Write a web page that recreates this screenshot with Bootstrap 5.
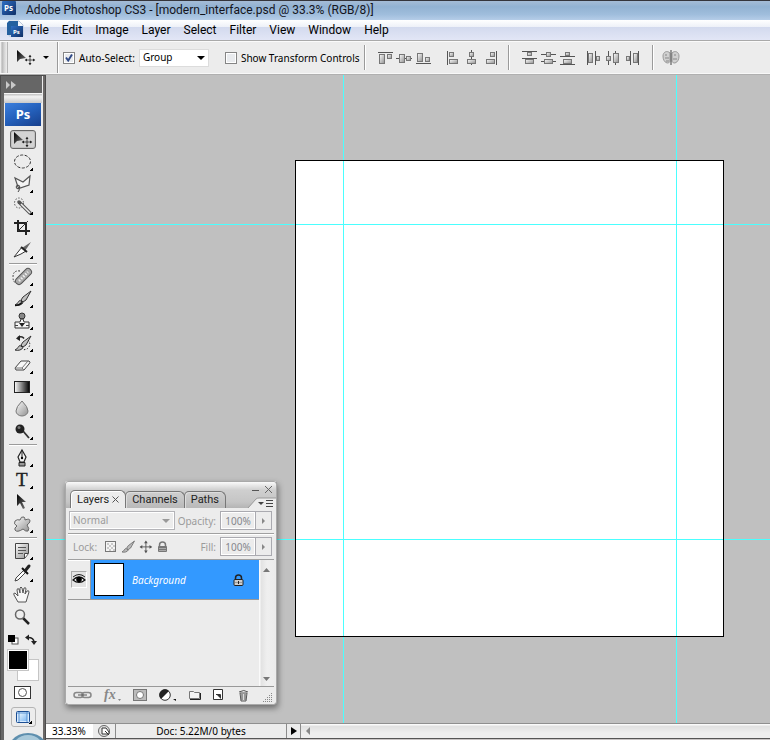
<!DOCTYPE html>
<html lang="en">
<head>
<meta charset="utf-8">
<meta name="viewport" content="width=device-width, initial-scale=1">
<title>Adobe Photoshop CS3 - [modern_interface.psd @ 33.3% (RGB/8)]</title>
<link rel="stylesheet" href="https://cdn.jsdelivr.net/npm/bootstrap@5.3.0/dist/css/bootstrap.min.css">
<style>
  body { font-family: "Noto Sans", sans-serif; font-size: 10px; line-height: 14px; color: #000; background: #ececec; }
  svg { display: block; flex: none; overflow: visible; }
  button { font: inherit; color: inherit; }
  .tool-btn { border: 0; background: none; padding: 0; }
  .title-bar { height: 20px; border-top: 1px solid #35353b; background: linear-gradient(#a5bcd6, #92b2d2 30%, #9fbddc 70%, #b5cde8); font: 12px/18px Roboto, sans-serif; color: #14141c; }
  .title-bar .title-text { padding-left: 9px; }
  .menu-bar { height: 20px; background: linear-gradient(#fff, #eef1f8 34%, #d3daee 36%, #e2e6f6); font: 12px/20px Roboto, sans-serif; padding-left: 7px; }
  .menu-bar a { color: #000; text-decoration: none; margin-right: 13px; }
  .options-bar { height: 35px; background: #ececec; border-top: 1px solid #a9a9a9; border-bottom: 1px solid #b0b0b0; box-shadow: inset 0 1px #fafafa, inset 0 -1px #f8f8f8; }
  .gripper { width: 8px; height: 31px; background: linear-gradient(90deg, #fff, #b8b8b8 30%, #d4d4d4 60%, #ededed); border-right: 1px solid #b5b5b5; }
  .v-rule { width: 2px; height: 25px; background: #9a9a9a; border-right: 1px solid #fff; }
  .v-rule.tall { height: 31px; }
  .check { width: 12px; height: 12px; margin: 0; border: 1px solid #858585; border-radius: 0; background-color: #e9ebee; background-size: 10px; box-shadow: inset 0 0 0 1px #fff; appearance: none; }
  .check:checked { background: #e9ebee url("data:image/svg+xml,%3Csvg xmlns='http://www.w3.org/2000/svg' viewBox='0 0 10 10'%3E%3Cpath d='M2 4.5 4.2 7.5 8 1.5' fill='none' stroke='%23304a86' stroke-width='1.9'/%3E%3C/svg%3E"); }
  .mode-select { width: 70px; height: 18px; padding: 0 4px 0 3px; border: 1px solid #dcdcdc; border-radius: 0; appearance: none; font-size: 10px; line-height: 15px; color: #000; background: #fff url("data:image/svg+xml,%3Csvg xmlns='http://www.w3.org/2000/svg' viewBox='0 0 8 4'%3E%3Cpath d='M0 0h8L4 4z'/%3E%3C/svg%3E") no-repeat right 3px center / 8px 4px; }
  .tool-rail { width: 46px; background: #ececec; border: solid #4c4c4c; border-width: 1px 1px 0 1px; box-shadow: inset 3px 0 #666, inset -2px 0 #6b6867; padding: 0 3px; }
  .rail-head { height: 17px; background: #666; }
  .rail-grip { height: 10px; background: linear-gradient(#c0c0c0, #f2f2f2 30%, #c9c9c9); border-top: 1px solid #f6f6f6; }
  .ps-logo { height: 23px; background: linear-gradient(155deg, #3c7fdd, #2460bb 50%, #173f8c); color: #fff; font: bold 13px/23px "Noto Sans", sans-serif; margin: 0 1px; text-align: center; }
  .rail-tools { padding-top: 3px; }
  .rail-tools .tool-btn { width: 26px; height: 22px; display: flex; align-items: center; justify-content: center; }
  .rail-tools .active { height: 19px; margin: 1px 0 2px; border: 1px solid #666; border-radius: 3px; background: #d3d3d3; box-shadow: inset 0 0 0 1px #c2c2c2; }
  .h-rule { width: 28px; height: 2px; margin: 2px 0 1px; border-top: 1px solid #9b9b9b; background: #fff; }
  .fly::after { content: ""; align-self: flex-end; margin: 0 0 2px -3px; width: 3px; height: 3px; background: linear-gradient(135deg, transparent 45%, #000 45%); }
  .screen-btn { width: 25px !important; height: 20px !important; border: 1px solid #b5b5b5; border-radius: 3px; margin-top: 3px; }
  .workspace { background: #c0c0c0; overflow: hidden; }
  .art { left: 249px; top: 85px; width: 429px; height: 477px; background: #fff; }
  .art-edge { background: none; border: 1px solid #000; z-index: 2; }
  .guide { background: #4affff; z-index: 1; }
  .guide-v { width: 1px; top: 0; bottom: 0; }
  .guide-h { height: 1px; left: 0; right: 0; }
  .g1 { left: 297px; } .g2 { left: 630px; } .g3 { top: 149px; } .g4 { top: 464px; }
  .layers { left: 19px; top: 406px; width: 212px; background: #ececec; border: 1px solid #fafafa; border-right-color: #8a8a8a; border-bottom-color: #777; outline: 1px solid #a9a9a9; outline-offset: -1px; border-radius: 3px; box-shadow: 1px 3px 6px rgba(0,0,0,.45); z-index: 3; color: #9b9b9b; padding: 0 2px; }
  .panel-head { height: 26px; margin: 0 -2px; padding: 0 3px 0 4px; border-radius: 3px 3px 0 0; background: linear-gradient(#fafafa, #cfcfcf 8px, #c5c5c5 20px, #b4b4b4); }
  .tab-btn { height: 17px; padding: 0 6px; border: 1px solid #777; border-bottom: 0; border-radius: 5px 6px 0 0; background: linear-gradient(#cfcfcf, #b9b9b9); font: 11px/16px Roboto, sans-serif; color: #222; margin-left: -1px; display: flex; align-items: center; gap: 3px; box-shadow: inset 1px 1px #ddd; }
  .tab-btn.current { height: 18px; background: #ececec; box-shadow: inset 1px 1px #fff; margin-left: 0; }
  .p-row { height: 26px; border-bottom: 1px solid #a0a0a0; box-shadow: 0 1px #fff; padding-left: 1px; padding-right: 2px; }
  .blend-select { width: 106px; height: 19px; padding: 0 3px; border: 1px solid #b4b4b8; border-radius: 0; box-shadow: inset 0 0 0 1px #fff; appearance: none; font-size: 10px; line-height: 15px; color: #9b9b9b; background: #ececec url("data:image/svg+xml,%3Csvg xmlns='http://www.w3.org/2000/svg' viewBox='0 0 8 4'%3E%3Cpath d='M0 0h8L4 4z' fill='%23999'/%3E%3C/svg%3E") no-repeat right 4px center / 8px 4px; }
  .lock-set { gap: 5px; }
  .pct { width: 36px; height: 19px; border: 1px solid #aaaab0; padding: 0; text-align: center; font-size: 10px; color: #85878c; background: #ececec; box-shadow: inset 0 0 0 1px #fff; border-radius: 0; }
  .pct-btn { width: 17px; height: 19px; border: 1px solid #aaaab0; margin-left: -1px; display: flex; align-items: center; justify-content: center; }
  .layer-list { height: 127px; border-bottom: 1px solid #999; }
  .layer-row { height: 40px; border-bottom: 1px solid #999; }
  .eye-cell { width: 23px; border-right: 1px solid #999; padding-left: 3px; }
  .eye-btn { width: 16px; height: 17px; border: 1px solid #aaa; border-right-color: #fff; border-bottom-color: #fff; background: #e3e3e3; padding: 0; }
  .layer-name { background: #39f; color: #fff; font-style: italic; padding: 0 15px 0 3px; }
  .thumb { width: 30px; height: 33px; border: 1px solid #000; background: #fff; }
  .scroll-y { width: 15px; padding: 8px 3px 5px 4px; background: linear-gradient(90deg, #fafafa 1px, #e2e2e2 2px, #efefef 8px, #ededed); }
  .panel-foot { height: 17px; padding: 0 1px 1px 5px; }
  .status { height: 16px; border-top: 1px solid #8f8f8f; border-bottom: 1px solid #555; color: #000; background: #ececec; }
  .zoom-box { width: 47px; border: 0; padding: 0 0 0 6px; font-size: 10px; background: #fff; color: #000; }
  .doc-info { width: 172px; border: solid #8b8b8b; border-width: 0 1px; }
  .run-btn { width: 14px; border-right: 1px solid #8b8b8b; display: flex; align-items: center; justify-content: center; }
  .scroll-x { background: linear-gradient(#fafafa 1px, #e0e0e0 2px, #eee 9px); padding-left: 5px; }
  .below { height: 1px; background: #c9c5c5; }
  .orb { left: 10px; bottom: 0; z-index: 4; }
</style>
<script src="https://cdn.jsdelivr.net/npm/bootstrap@5.3.0/dist/js/bootstrap.bundle.min.js"></script>
</head>
<body class="vh-100 d-flex flex-column overflow-hidden">

<svg width="0" height="0" class="position-absolute" aria-hidden="true">
  <defs>
    <linearGradient id="gy" x1="0" y1="0" x2="1" y2="1"><stop offset="0" stop-color="#fdfdfd"/><stop offset="1" stop-color="#909090"/></linearGradient>
    <linearGradient id="bl" x1="0" y1="0" x2="1" y2="1"><stop offset="0" stop-color="#2f6fc4"/><stop offset="1" stop-color="#0f2f66"/></linearGradient>
    <linearGradient id="bw"><stop offset="0" stop-color="#fff"/><stop offset="1" stop-color="#000"/></linearGradient>
    <linearGradient id="dk" x1="0" y1="0" x2="1" y2="1"><stop offset="0" stop-color="#000"/><stop offset="1" stop-color="#777"/></linearGradient>
    <linearGradient id="sc" x1="0" y1="0" x2="1" y2="1"><stop offset="0" stop-color="#eaf6ff"/><stop offset="1" stop-color="#7fb8f2"/></linearGradient>
    <g id="four"><path d="M6 0v12M0 6h12" stroke="#222" fill="none"/><path d="M6-1 8 2H4zM6 13 4 10h4zM-1 6l3-2v4zM13 6l-3 2V4z" fill="#222"/></g>
    <g id="move"><path d="M0 0v12l3-3 6-1z" fill="url(#dk)"/><use href="#four" transform="translate(8.500 5.500) scale(.75)"/></g>
    <path id="brush" d="M16 0 8 6 6 9l2 2 3-2zM5 9.500C3 10 3 13 0 14c3 1 7 0 8-2.500z"/>
  </defs>
</svg>

<header>
  <div class="title-bar d-flex">
    <svg width="17" height="17" viewBox="0 0 17 17"><rect x="2" width="14" height="14" rx="1" fill="url(#bl)"/><text x="4" y="10" font-family="Noto Sans" font-size="8" font-weight="bold" fill="#fff">Ps</text></svg>
    <span class="title-text">Adobe Photoshop CS3 - [modern_interface.psd @ 33.3% (RGB/8)]</span>
  </div>
  <nav class="menu-bar d-flex" aria-label="Application menu">
    <svg width="23" height="20" viewBox="0 0 23 20"><path d="M2 1h10l4 4v11H2z" fill="#f3f6fb" stroke="#b9c6da"/><path d="M0 3 2 1h9v5H4v9H0z" fill="#24609f"/><rect x="4" y="6" width="12" height="11" fill="url(#bl)"/><text x="6" y="14" font-family="Noto Sans" font-size="6" font-weight="bold" fill="#fff">Ps</text></svg>
    <a href="#">File</a><a href="#">Edit</a><a href="#">Image</a><a href="#">Layer</a><a href="#">Select</a><a href="#">Filter</a><a href="#">View</a><a href="#">Window</a><a href="#">Help</a>
  </nav>
  <div class="options-bar d-flex align-items-center">
    <div class="gripper"></div>
    <button class="tool-btn d-flex align-items-center ms-2 gap-2" aria-label="Move tool presets">
      <svg width="19" height="17" viewBox="0 0 19 17"><use href="#move" x="1" y="1"/></svg>
      <svg width="6" height="3" viewBox="0 0 6 3"><path d="M0 0h6L3 3z"/></svg>
    </button>
    <div class="v-rule tall ms-2"></div>
    <input class="check ms-1" type="checkbox" id="auto" checked><label class="px-1" for="auto">Auto-Select:</label>
    <select class="mode-select me-3" aria-label="Auto-select target"><option>Group</option><option>Layer</option></select>
    <input class="check" type="checkbox" id="trans"><label class="ps-1" for="trans">Show Transform Controls</label>
    <div class="v-rule ms-1"></div>
    <div class="d-flex ms-2">
      <button class="tool-btn ms-1" aria-label="Align top edges"><svg width="15" height="16" viewBox="0 0 15 16"><path d="M0 2.500h15" stroke="#555"/><rect x="1.500" y="4.500" width="5" height="9" fill="url(#gy)" stroke="#777"/><rect x="9.500" y="4.500" width="4" height="4" fill="url(#gy)" stroke="#777"/></svg></button>
      <button class="tool-btn ms-1" aria-label="Align vertical centers"><svg width="15" height="16" viewBox="0 0 15 16"><path d="M-1 8.500h16" stroke="#555"/><rect x="2.500" y="4.500" width="5" height="8" fill="url(#gy)" stroke="#777"/><rect x="9.500" y="6.500" width="4" height="4" fill="url(#gy)" stroke="#777"/></svg></button>
      <button class="tool-btn ms-1" aria-label="Align bottom edges"><svg width="15" height="16" viewBox="0 0 15 16"><path d="M0 13.500h15" stroke="#555"/><rect x="1.500" y="3.500" width="5" height="8" fill="url(#gy)" stroke="#777"/><rect x="9.500" y="7.500" width="4" height="4" fill="url(#gy)" stroke="#777"/></svg></button>
      <button class="tool-btn ms-3" aria-label="Align left edges"><svg width="15" height="16" viewBox="0 0 15 16"><path d="M.5 1v14" stroke="#555"/><rect x="2.500" y="2.500" width="4" height="4" fill="url(#gy)" stroke="#777"/><rect x="2.500" y="9.500" width="8" height="4" fill="url(#gy)" stroke="#777"/></svg></button>
      <button class="tool-btn ms-1" aria-label="Align horizontal centers"><svg width="15" height="16" viewBox="0 0 15 16"><path d="M5.500 0v15" stroke="#555"/><rect x="3.500" y="2.500" width="4" height="4" fill="url(#gy)" stroke="#777"/><rect x="1.500" y="9.500" width="8" height="4" fill="url(#gy)" stroke="#777"/></svg></button>
      <button class="tool-btn ms-1" aria-label="Align right edges"><svg width="15" height="16" viewBox="0 0 15 16"><path d="M11.500 1v14" stroke="#555"/><rect x="5.500" y="2.500" width="4" height="4" fill="url(#gy)" stroke="#777"/><rect x="1.500" y="9.500" width="8" height="4" fill="url(#gy)" stroke="#777"/></svg></button>
    </div>
    <div class="v-rule mx-2"></div>
    <div class="d-flex ms-1">
      <button class="tool-btn me-1" aria-label="Distribute top edges"><svg width="15" height="16" viewBox="0 0 15 16"><path d="M0 1.500h15M0 8.500h15" stroke="#555"/><rect x="5.500" y="2.500" width="4" height="3" fill="url(#gy)" stroke="#777"/><rect x="3.500" y="9.500" width="8" height="4" fill="url(#gy)" stroke="#777"/></svg></button>
      <button class="tool-btn me-1" aria-label="Distribute vertical centers"><svg width="15" height="16" viewBox="0 0 15 16"><path d="M0 4.500h15M0 11.500h15" stroke="#555"/><rect x="5.500" y="2.500" width="4" height="4" fill="url(#gy)" stroke="#777"/><rect x="3.500" y="9.500" width="8" height="4" fill="url(#gy)" stroke="#777"/></svg></button>
      <button class="tool-btn me-1" aria-label="Distribute bottom edges"><svg width="15" height="16" viewBox="0 0 15 16"><path d="M0 6.500h15M0 14.500h15" stroke="#555"/><rect x="5.500" y="2.500" width="4" height="3" fill="url(#gy)" stroke="#777"/><rect x="3.500" y="9.500" width="8" height="4" fill="url(#gy)" stroke="#777"/></svg></button>
      <button class="tool-btn ms-2 me-1" aria-label="Distribute left edges"><svg width="15" height="16" viewBox="0 0 15 16"><path d="M.5 1v14M8.500 1v14" stroke="#555"/><rect x="1.500" y="3.500" width="4" height="9" fill="url(#gy)" stroke="#777"/><rect x="9.500" y="6.500" width="3" height="4" fill="url(#gy)" stroke="#777"/></svg></button>
      <button class="tool-btn me-1" aria-label="Distribute horizontal centers"><svg width="15" height="16" viewBox="0 0 15 16"><path d="M2.500 1v14M9.500 1v14" stroke="#555"/><rect x=".5" y="6.500" width="4" height="4" fill="url(#gy)" stroke="#777"/><rect x="7.500" y="3.500" width="5" height="9" fill="url(#gy)" stroke="#777"/></svg></button>
      <button class="tool-btn me-1" aria-label="Distribute right edges"><svg width="15" height="16" viewBox="0 0 15 16"><path d="M5.500 1v14M13.500 1v14" stroke="#555"/><rect x="1.500" y="6.500" width="3" height="4" fill="url(#gy)" stroke="#777"/><rect x="8.500" y="3.500" width="4" height="9" fill="url(#gy)" stroke="#777"/></svg></button>
    </div>
    <div class="v-rule mx-2"></div>
    <button class="tool-btn" aria-label="Auto-align layers"><svg width="18" height="16" viewBox="0 0 18 16"><path d="M8 3C5 0 1 2 1 6c0 3 1 6 4 7 2 0 3-1 3-2zM10 3c3-3 7-1 7 3 0 3-1 6-4 7-2 0-3-1-3-2z" fill="#d0d0d0" stroke="#999"/><path d="M3 5h2M3 8h4M12 5h2M11 9h4M4 11h3" stroke="#888"/><path d="M9 0v15" stroke="#444"/></svg></button>
  </div>
</header>

<div class="d-flex flex-grow-1 overflow-hidden position-relative">
  <aside class="tool-rail flex-shrink-0">
    <div class="rail-head px-1 pt-1"><svg width="12" height="9" viewBox="0 0 12 9"><path d="M-2 1v8l4-4zM3 1v8l5-4z" fill="#c9c9c9"/></svg></div>
    <div class="rail-grip"></div>
    <div class="ps-logo">Ps</div>
    <div class="rail-tools d-flex flex-column align-items-center">
      <button class="tool-btn active" aria-label="Move"><svg width="18" height="15" viewBox="0 0 18 15"><use href="#move" x="0" y="0"/></svg></button>
      <button class="tool-btn fly" aria-label="Elliptical marquee"><svg width="20" height="18" viewBox="0 0 20 18"><ellipse cx="9.500" cy="8.500" rx="8" ry="6.500" fill="none" stroke="#333" stroke-dasharray="3 1.500"/></svg></button>
      <button class="tool-btn fly" aria-label="Polygonal lasso"><svg width="20" height="18" viewBox="0 0 20 18"><path d="M5 12 2 3l8 4 7-6-1 9-9 3z" fill="#f4f4f4" stroke="#555" stroke-width="1.200"/><circle cx="5" cy="12" r="1.800" fill="none" stroke="#444"/><path d="M6 13q1 2-1 4" fill="none" stroke="#444"/></svg></button>
      <button class="tool-btn fly" aria-label="Quick selection"><svg width="20" height="18" viewBox="0 0 20 18"><ellipse cx="6" cy="6" rx="4.500" ry="5" fill="none" stroke="#555" stroke-dasharray="1.500 1.500"/><path d="m6 5 11 11" stroke="#555" stroke-width="3.500" stroke-linecap="round"/><path d="m8 7 9 9" stroke="#eee" stroke-width="1.500"/></svg></button>
      <button class="tool-btn" aria-label="Crop"><svg width="20" height="18" viewBox="0 0 20 18"><path d="M5 1v11h12M1 4h12v12" fill="none" stroke="#222" stroke-width="2"/><path d="M5 12 15 2" stroke="#333"/></svg></button>
      <button class="tool-btn fly" aria-label="Slice"><svg width="20" height="18" viewBox="0 0 20 18"><path d="m18 1-9 6 3 3z" fill="#666"/><path d="m9 6 4 4-5 3-7 3z" fill="#fff" stroke="#333"/><path d="m8 6 6 5" stroke="#222" stroke-width="2"/></svg></button>
      <div class="h-rule"></div>
      <button class="tool-btn fly" aria-label="Spot healing brush"><svg width="20" height="18" viewBox="0 0 20 18"><path d="M7 3q-7-1-7 6 0 6 4 6" fill="none" stroke="#333" stroke-dasharray="1.500 1.500"/><path d="M6 13 15 4" stroke="#555" stroke-width="8" stroke-linecap="round"/><path d="M6 13 15 4" stroke="#a9a9a9" stroke-width="6" stroke-linecap="round"/><path d="M6 13 15 4" stroke="#eee" stroke-width="2.500" stroke-dasharray="1.500 1.500"/></svg></button>
      <button class="tool-btn fly" aria-label="Brush"><svg width="20" height="18" viewBox="0 0 20 18"><use href="#brush" x="2" y="1" fill="url(#gy)" stroke="#333"/><path d="M2 15.500q4 0 7-3" stroke="#111" fill="none" stroke-width="1.500"/></svg></button>
      <button class="tool-btn fly" aria-label="Clone stamp"><svg width="20" height="18" viewBox="0 0 20 18"><circle cx="9" cy="4" r="3" fill="#888" stroke="#333"/><path d="M8 7h2l1 3h5v6H2v-6h5z" fill="#f4f4f4" stroke="#333"/><path d="M6 11h6l-3 4z" fill="#222"/><path d="M2 13.500h3M13 13.500h3" stroke="#444"/></svg></button>
      <button class="tool-btn fly" aria-label="History brush"><svg width="20" height="18" viewBox="0 0 20 18"><use href="#brush" x="2" y="2" fill="url(#gy)" stroke="#333"/><path d="M5 3.500q4-2 6 1" fill="none" stroke="#222" stroke-width="1.500"/><path d="M3 4.500 7 1v6z" fill="#222"/><path d="M15 6q4 5-1 9l-4 1" fill="none" stroke="#222" stroke-dasharray="1.500 1.500"/></svg></button>
      <button class="tool-btn fly" aria-label="Eraser"><svg width="20" height="18" viewBox="0 0 20 18"><path d="m2 12 6-7h8q2 1 0 3l-5 6H3z" fill="#f7f7f7" stroke="#444"/><path d="M2 12h7l6-7M9 12l2 2" fill="none" stroke="#777"/></svg></button>
      <button class="tool-btn fly" aria-label="Gradient"><svg width="20" height="18" viewBox="0 0 20 18"><rect x="1.500" y="3.500" width="15" height="11" fill="url(#bw)" stroke="#222"/></svg></button>
      <button class="tool-btn fly" aria-label="Blur"><svg width="20" height="18" viewBox="0 0 20 18"><path d="M9 1q6 6 6 10a6 5 0 0 1-12 0q0-4 6-10z" fill="url(#gy)" stroke="#777"/></svg></button>
      <button class="tool-btn fly" aria-label="Dodge"><svg width="20" height="18" viewBox="0 0 20 18"><path d="m10 9 6 7" stroke="#333" stroke-width="1.800"/><circle cx="7" cy="7" r="4.500" fill="#222"/><circle cx="6" cy="5.500" r="1.500" fill="#777"/></svg></button>
      <div class="h-rule"></div>
      <button class="tool-btn fly" aria-label="Pen"><svg width="20" height="18" viewBox="0 0 20 18"><path d="m9 1 4 7-2 5H7L5 8z" fill="#f4f4f4" stroke="#222" stroke-width="1.200"/><path d="M9 1v7" stroke="#222"/><circle cx="9" cy="9" r="1.200"/><path d="M6 13.500h6V17H6z" fill="#999" stroke="#222"/></svg></button>
      <button class="tool-btn fly" aria-label="Type"><svg width="20" height="18" viewBox="0 0 20 18"><text x="3" y="15" font-family="Liberation Serif" font-size="19" fill="#222" stroke="#222" stroke-width=".4">T</text></svg></button>
      <button class="tool-btn fly" aria-label="Path selection"><svg width="20" height="18" viewBox="0 0 20 18"><path d="M4 1v12l3-3 3 6 2-1-3-6h4z" fill="url(#dk)"/></svg></button>
      <button class="tool-btn fly" aria-label="Custom shape"><svg width="20" height="18" viewBox="0 0 20 18"><path d="M7 5q1-4 4-3 1 1 1 3 5-2 5 1 0 2-3 4 3 4 1 6-2 1-5-2-6 4-8 1-1-2 2-4-4-2-2-5 2-2 5-1z" fill="url(#gy)" stroke="#666"/></svg></button>
      <div class="h-rule"></div>
      <button class="tool-btn fly" aria-label="Notes"><svg width="20" height="18" viewBox="0 0 20 18"><path d="M2.500 1.500h13v10l-4 5h-9z" fill="url(#gy)" stroke="#444"/><path d="M5 5.500h8M5 8.500h8M5 11.500h5" stroke="#555"/><path d="M11.500 16v-4.500H15" fill="#fff" stroke="#444"/></svg></button>
      <button class="tool-btn fly" aria-label="Eyedropper"><svg width="20" height="18" viewBox="0 0 20 18"><path d="m11 6-8 8-1 3 3-1 8-8z" fill="#fff" stroke="#444"/><path d="m9 4 6 6" stroke="#111" stroke-width="2"/><path d="m12 7 4-5" stroke="#222" stroke-width="3" stroke-linecap="round"/></svg></button>
      <button class="tool-btn" aria-label="Hand"><svg width="20" height="18" viewBox="0 0 20 18"><path d="M5 16 1 9q-1-2 1-2l3 3-1-6q0-2 2-1l1 4V2q1-2 2 0l1 5 1-5q2-1 2 1l-1 5 2-3q2-1 2 1l-3 10z" fill="#f7f7f7" stroke="#555"/></svg></button>
      <button class="tool-btn" aria-label="Zoom"><svg width="20" height="18" viewBox="0 0 20 18"><path d="m10 10 6 6" stroke="#222" stroke-width="2.500"/><circle cx="7" cy="6.500" r="4.500" fill="#eee" stroke="#666" stroke-width="1.500"/></svg></button>
      <button class="tool-btn mt-1 h-auto" aria-label="Foreground and background colors"><svg width="32" height="50" viewBox="0 0 32 50">
        <rect x="5" y="6" width="6" height="6" fill="#fff" stroke="#555"/><rect x="1" y="3" width="7" height="7"/>
        <path d="M21 5.500q6 0 6 5" fill="none" stroke="#222" stroke-width="1.500"/><path d="m18 5.500 4-3v6zM24 9h6l-3 4z" fill="#222"/>
        <rect x="10.500" y="27.500" width="21" height="21" fill="#fff" stroke="#c5c5c5"/><rect x=".5" y="17.500" width="21" height="21" fill="#fff" stroke="#c5c5c5"/><rect x="2" y="19" width="18" height="18"/></svg></button>
      <button class="tool-btn" aria-label="Quick mask mode"><svg width="18" height="14" viewBox="0 0 18 14"><rect x=".5" y=".5" width="16" height="12" fill="#fff" stroke="#333"/><circle cx="8.500" cy="6.500" r="4" fill="#fff" stroke="#555"/></svg></button>
      <button class="tool-btn fly screen-btn" aria-label="Screen mode"><svg width="17" height="14" viewBox="0 0 17 14"><rect x="1.500" y="1.500" width="13" height="11" rx="1" fill="#d8ecff" stroke="#1c4f94"/><rect x="4" y="3" width="8" height="8" fill="url(#sc)"/><path d="M4 2v10M12 2v10M2 3h12" stroke="#5b93d2" fill="none"/></svg></button>
    </div>
  </aside>
  <svg class="orb position-absolute" width="36" height="7" viewBox="0 0 36 7"><path d="M2 7Q8 0 18 0t16 7z" fill="#5e8fae"/><path d="M6 7q5-5 12-5t12 5z" fill="#a9c9da"/></svg>

  <div class="flex-grow-1 d-flex flex-column overflow-hidden">
    <main class="workspace flex-grow-1 position-relative">
      <div class="art position-absolute"></div>
      <div class="guide guide-v g1 position-absolute"></div><div class="guide guide-v g2 position-absolute"></div>
      <div class="guide guide-h g3 position-absolute"></div><div class="guide guide-h g4 position-absolute"></div>
      <div class="art art-edge position-absolute"></div>

      <section class="layers position-absolute" aria-label="Layers panel">
        <div class="panel-head d-flex align-items-end">
          <button class="tab-btn current">Layers <svg width="7" height="7" viewBox="0 0 7 7"><path d="m.5.5 6 6m0-6-6 6" stroke="#555"/></svg></button>
          <button class="tab-btn">Channels</button>
          <button class="tab-btn">Paths</button>
          <div class="ms-auto d-flex flex-column align-items-end justify-content-between h-100 pt-1">
            <div class="d-flex gap-1 align-items-center">
              <button class="tool-btn" aria-label="Minimize"><svg width="8" height="7" viewBox="0 0 8 7"><path d="M0 4.500h7" stroke="#555"/></svg></button>
              <button class="tool-btn" aria-label="Close"><svg width="9" height="7" viewBox="0 0 9 7"><path d="m1 0 7 7m0-7L1 7" stroke="#666"/></svg></button>
            </div>
            <button class="tool-btn" aria-label="Panel menu"><svg width="22" height="10" viewBox="0 0 22 10"><path d="M-3 10 5 1q1-1 3-1h17v10z" fill="#ececec"/><path d="M-3 10 5 1q1-1 3-1h17" fill="none" stroke="#999"/><path d="M7 4h6l-3 3z" fill="#444"/><path d="M15 2.500h7M15 5.500h7M15 8.500h7" stroke="#444"/></svg></button>
          </div>
        </div>
        <div class="p-row d-flex align-items-center">
          <select class="blend-select" aria-label="Blend mode"><option>Normal</option></select>
          <label class="ms-auto me-1" for="op">Opacity:</label>
          <input class="pct" id="op" value="100%"><button class="tool-btn pct-btn" aria-label="Opacity slider"><svg width="4" height="6" viewBox="0 0 4 6"><path d="M0 0v6l3-3z" fill="#888"/></svg></button>
        </div>
        <div class="p-row d-flex align-items-center">
          <span class="ps-1 me-1">Lock:</span>
          <div class="lock-set d-flex ms-1">
            <button class="tool-btn" aria-label="Lock transparency"><svg width="12" height="12" viewBox="0 0 12 12"><rect x=".5" y=".5" width="10" height="10" fill="#f4f4f4" stroke="#777"/><path d="M2 2h2v2H2zM6 2h2v2H6zM4 4h2v2H4zM8 4h2v2H8zM2 6h2v2H2zM6 6h2v2H6zM4 8h2v2H4zM8 8h2v2H8z" fill="#c9c9c9"/></svg></button>
            <button class="tool-btn" aria-label="Lock pixels"><svg width="13" height="12" viewBox="0 0 13 12"><use href="#brush" transform="scale(.78)" fill="#bbb" stroke="#666"/></svg></button>
            <button class="tool-btn" aria-label="Lock position"><svg width="12" height="12" viewBox="0 0 12 12"><g opacity=".75"><use href="#four" transform="translate(.5 .5) scale(.9)"/></g></svg></button>
            <button class="tool-btn" aria-label="Lock all"><svg width="11" height="12" viewBox="0 0 11 12"><path d="M2.500 6V4a3 3 0 0 1 6 0v2" fill="none" stroke="#777" stroke-width="1.500"/><rect x="1" y="5" width="9" height="6" rx="1" fill="#777"/><path d="M2 7.500h7M2 9.500h7" stroke="#aaa"/></svg></button>
          </div>
          <label class="ms-auto me-1" for="fill">Fill:</label>
          <input class="pct" id="fill" value="100%"><button class="tool-btn pct-btn" aria-label="Fill slider"><svg width="4" height="6" viewBox="0 0 4 6"><path d="M0 0v6l3-3z" fill="#888"/></svg></button>
        </div>
        <div class="layer-list d-flex">
          <div class="flex-grow-1">
            <div class="layer-row d-flex">
              <div class="eye-cell d-flex align-items-center flex-shrink-0"><button class="eye-btn" aria-label="Toggle visibility"><svg width="14" height="15" viewBox="0 0 14 15"><path d="M1 8q6-6 12 0-6 5-12 0z" fill="#fff" stroke="#111" stroke-width="1.200"/><circle cx="7" cy="7.500" r="2.800"/><path d="M1 5q6-5 12 0" fill="none" stroke="#222"/></svg></button></div>
              <div class="layer-name d-flex align-items-center flex-grow-1">
                <span class="thumb"></span><span class="ms-2">Background</span>
                <svg class="ms-auto" width="11" height="12" viewBox="0 0 11 12"><path d="M2.500 6V4a3 3 0 0 1 6 0v2" fill="none" stroke="#222" stroke-width="1.500"/><rect x="1" y="5.500" width="9" height="6" rx="1" fill="#ccc" stroke="#222"/><path d="M2 8.500h7" stroke="#999"/><path d="M5.500 7v3" stroke="#222"/></svg>
              </div>
            </div>
          </div>
          <div class="scroll-y d-flex flex-column justify-content-between">
            <svg width="8" height="4" viewBox="0 0 8 4"><path d="M0 4h7L3.500 0z" fill="#777"/></svg>
            <svg width="8" height="4" viewBox="0 0 8 4"><path d="M0 0h7L3.500 4z" fill="#777"/></svg>
          </div>
        </div>
        <div class="panel-foot d-flex align-items-center justify-content-between">
          <button class="tool-btn" aria-label="Link layers"><svg width="19" height="9" viewBox="0 0 19 9"><rect x="1" y="1.500" width="9" height="5" rx="2.500" fill="none" stroke="#888" stroke-width="1.500"/><rect x="9" y="1.500" width="9" height="5" rx="2.500" fill="none" stroke="#888" stroke-width="1.500"/><path d="M5 4h9" stroke="#555"/></svg></button>
          <button class="tool-btn" aria-label="Layer style"><svg width="19" height="14" viewBox="0 0 19 14"><text x="1" y="11" font-family="Liberation Serif" font-size="14" font-style="italic" font-weight="bold" fill="#888">fx</text><path d="M15 11h3l-1.500 2z" fill="#888"/></svg></button>
          <button class="tool-btn" aria-label="Add mask"><svg width="15" height="13" viewBox="0 0 15 13"><rect x=".5" y=".5" width="13" height="11" fill="#bbb" stroke="#777"/><circle cx="7" cy="6" r="3.500" fill="#fff" stroke="#777"/></svg></button>
          <button class="tool-btn" aria-label="Adjustment layer"><svg width="18" height="13" viewBox="0 0 18 13"><circle cx="6" cy="6" r="5.300" fill="#fff" stroke="#333"/><path d="M2 10A5.500 5.500 0 0 1 10 2z" fill="#222"/><path d="M14 10h3v2z" fill="#111"/></svg></button>
          <button class="tool-btn" aria-label="New group"><svg width="13" height="11" viewBox="0 0 13 11"><path d="M.5 8.500v-7h4l1 1h5v6z" fill="#f4f4f4" stroke="#777"/><path d="M11.500 3v6.500H1" fill="none" stroke="#222"/></svg></button>
          <button class="tool-btn" aria-label="New layer"><svg width="12" height="12" viewBox="0 0 12 12"><path d="M.5.500h9v10h-9z" fill="#fff" stroke="#333"/><path d="M8 10V6H4z" fill="#333"/><path d="M3 5.500h4.500V9" fill="none" stroke="#333"/></svg></button>
          <button class="tool-btn" aria-label="Delete layer"><svg width="16" height="13" viewBox="0 0 16 13"><path d="M4 4h7l-1 8H5z" fill="#ddd" stroke="#555"/><path d="M3 3q5-3 9 0M6 5v6M9 5v6" stroke="#555" fill="none"/></svg></button>
          <svg class="align-self-end" width="10" height="10" viewBox="0 0 10 10"><path d="M0 8.500h10M2 6.500h8M4 4.500h6M6 2.500h4M8 .5h2" stroke="#888" stroke-dasharray="1 1"/></svg>
        </div>
      </section>
    </main>
    <footer class="status d-flex flex-shrink-0">
      <input class="zoom-box" value="33.33%" aria-label="Zoom level">
      <button class="tool-btn px-1" aria-label="Version Cue"><svg width="14" height="14" viewBox="0 0 14 14"><circle cx="7" cy="7" r="5.500" fill="#e4e4e4" stroke="#666"/><path d="M5 4h4l3 4v2H5z" fill="#fff" stroke="#333"/><path d="m8 7 4 4" stroke="#333"/></svg></button>
      <div class="doc-info text-center">Doc: 5.22M/0 bytes</div>
      <button class="tool-btn run-btn" aria-label="Status menu"><svg width="6" height="8" viewBox="0 0 6 8"><path d="M0 0v8l6-4z"/></svg></button>
      <div class="scroll-x flex-grow-1 d-flex align-items-center"><svg width="4" height="8" viewBox="0 0 4 8"><path d="M4 0v8L0 4z" fill="#888"/></svg></div>
    </footer>
    <div class="below flex-shrink-0"></div>
  </div>
</div>
</body>
</html>
